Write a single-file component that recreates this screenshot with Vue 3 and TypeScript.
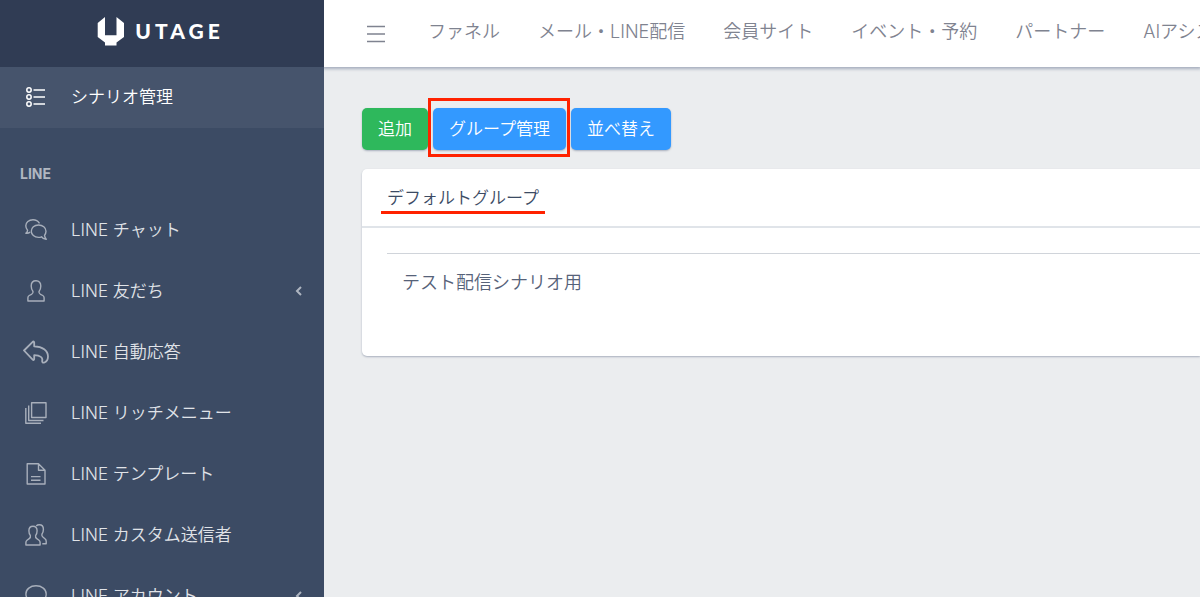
<script setup lang="ts">
interface MenuItem {
  label: string
  icon: string
  expandable?: boolean
}

const lineMenu: MenuItem[] = [
  { label: 'LINE チャット', icon: 'chat' },
  { label: 'LINE 友だち', icon: 'user', expandable: true },
  { label: 'LINE 自動応答', icon: 'reply' },
  { label: 'LINE リッチメニュー', icon: 'library' },
  { label: 'LINE テンプレート', icon: 'file' },
  { label: 'LINE カスタム送信者', icon: 'people' },
  { label: 'LINE アカウント', icon: 'bubble', expandable: true },
]

const topNav: string[] = [
  'ファネル',
  'メール・LINE配信',
  '会員サイト',
  'イベント・予約',
  'パートナー',
  'AIアシスタント',
]

const scenarios: string[] = ['テスト配信シナリオ用']
</script>

<template>
  <div class="layout">
    <aside class="sidebar">
      <a href="#" class="brand">
        <svg class="brand-mark" viewBox="0 0 28 30" aria-hidden="true">
          <path d="M8 1V19.300H19.500V1L27 7V21L19.500 26.500V29.500H8V26.500L.7 21V7Z" />
        </svg>
        <span class="brand-name">UTAGE</span>
      </a>
      <nav class="menu">
        <a href="#" class="item active">
          <svg class="icon" viewBox="0 0 26 26" aria-hidden="true">
            <circle cx="6" cy="6" r="2.200" /><circle cx="6" cy="13" r="2.200" /><circle cx="6" cy="20" r="2.200" />
            <path d="M10.500 6H22M10.500 13H22M10.500 20H22" />
          </svg>
          <span>シナリオ管理</span>
        </a>
        <h2 class="section">LINE</h2>
        <a v-for="item in lineMenu" :key="item.label" href="#" class="item">
          <svg class="icon" viewBox="0 0 26 26" aria-hidden="true">
            <template v-if="item.icon === 'chat'">
              <path d="M16.500 6.300C15 4 12.800 2.800 10 2.800C5.800 2.800 2.800 5.500 2.800 8.800C2.800 10.700 3.500 12 4.600 13.200C4.700 14.500 4 15.300 2.800 16.200C4.600 16.400 6 16 7.200 15.200" />
              <path d="M15.500 8C11.300 8 8.300 10.800 8.300 14.200S11.300 20.400 15.500 20.400C16.600 20.400 17.600 20.200 18.500 19.800C19.800 21.500 21.500 22.400 23.300 22.300C22.400 21 21.700 19.800 21.500 18.300C22.400 17.100 23 15.800 23 14.200C23 10.800 19.700 8 15.500 8Z" />
            </template>
            <path v-else-if="item.icon === 'user'" d="M13 2.800C9.800 2.800 8.200 5 8.200 8C8.200 10.300 8.800 12 10 13.500C10.300 14.800 9.800 15.600 8.500 16.300L6.200 17.500C5.300 18 4.900 18.800 4.900 19.800V23H21.100V19.800C21.100 18.800 20.700 18 19.800 17.500L17.500 16.300C16.200 15.600 15.700 14.800 16 13.500C17.200 12 17.800 10.300 17.800 8C17.800 5 16.200 2.800 13 2.800Z" />
            <path v-else-if="item.icon === 'reply'" class="bold" d="M1 11.500L9.700 2.800C10.400 2.200 11.200 2.600 11.200 3.500V7.300C19.500 7.500 25 11.500 25 17.500C25 20.300 23.800 22.500 21.500 23.500C20 24 18.900 23.300 19.200 21.800C20 18.500 17.500 16.500 11.200 16.200V20C11.200 20.900 10.400 21.300 9.700 20.600Z" />
            <path v-else-if="item.icon === 'library'" d="M8.600 2.800H23V17.500H8.600ZM5.700 5.500V20.500H20.500M2.800 8V23.200H18" />
            <path v-else-if="item.icon === 'file'" d="M4.200 2.800H15.500L22 9.300V23H4.200ZM15.500 2.800V9.300H22M8 15.600H17.500M8 19.200H17.500" />
            <template v-else-if="item.icon === 'people'">
              <path d="M10 4.200C7.300 4.200 5.900 6 5.900 8.700C5.900 10.800 6.500 12.500 7.400 13.700C7.700 15 7.300 15.800 6.200 16.600L4 18.200C3.200 18.800 2.900 19.500 2.900 20.400V23H17.100V20.400C17.100 19.500 16.800 18.800 16 18.200L13.800 16.600C12.700 15.800 12.300 15 12.600 13.700C13.500 12.500 14.100 10.800 14.100 8.700C14.100 6 12.700 4.200 10 4.200Z" />
              <path d="M13.200 4C14 3.200 15 2.800 16.300 2.800C19 2.800 20.400 4.700 20.400 7.300C20.400 9.500 19.800 11.200 18.900 12.300C18.600 13.700 19 14.500 20.100 15.300L22 16.800C22.900 17.400 23.200 18.200 23.200 19.200V21.800H19.300" />
            </template>
            <path v-else d="M13 2.800C7.200 2.800 2.900 6.300 2.900 11S7.200 19.500 13 19.500L18.500 23V18.500C21.400 17 23.200 14.200 23.200 11C23.200 6.300 18.800 2.800 13 2.800Z" />
          </svg>
          <span>{{ item.label }}</span>
          <svg v-if="item.expandable" class="chevron" viewBox="0 0 8 10" aria-hidden="true">
            <path d="M6 1L2 5L6 9" />
          </svg>
        </a>
      </nav>
    </aside>

    <div class="page">
      <header class="header">
        <button type="button" class="toggle" aria-label="メニュー">
          <svg viewBox="0 0 18 18" aria-hidden="true"><path d="M0 1.500H18M0 9H18M0 16.500H18" /></svg>
        </button>
        <nav class="top-nav">
          <a v-for="label in topNav" :key="label" href="#">{{ label }}</a>
        </nav>
      </header>

      <main class="content">
        <div class="actions">
          <button type="button" class="btn success">追加</button>
          <div class="highlight">
            <button type="button" class="btn info">グループ管理</button>
          </div>
          <button type="button" class="btn info">並べ替え</button>
        </div>

        <section class="card">
          <div class="card-header"><h1 class="title">デフォルトグループ</h1></div>
          <div class="card-body">
            <table class="scenarios">
              <tbody>
                <tr v-for="name in scenarios" :key="name">
                  <td><a href="#">{{ name }}</a></td>
                </tr>
              </tbody>
            </table>
          </div>
        </section>
      </main>
    </div>
  </div>
</template>

<style>
body {
  margin: 0;
  overflow: hidden;
  background: #ebedef;
}
</style>

<style scoped>
.layout {
  display: flex;
  height: 100vh;
  font-family: Inter, "Noto Sans CJK JP", sans-serif;
  font-size: 18px;
  font-weight: 350;
  line-height: 26px;
  color: #3c4b64;
}
.layout * {
  box-sizing: border-box;
}
a {
  color: inherit;
  text-decoration: none;
}
.sidebar {
  flex: 0 0 324px;
  overflow: hidden;
  background: #3c4b64;
  color: #e0e3e8;
}
.brand {
  display: flex;
  align-items: center;
  justify-content: center;
  gap: 10px;
  height: 67px;
  padding: 0 3px 5px 0;
  background: #303c54;
  color: #fff;
}
.brand-mark {
  width: 28px;
  height: 30px;
  fill: #fff;
}
.brand-name {
  font-family: Lato, sans-serif;
  font-size: 21px;
  font-weight: 900;
  letter-spacing: 4px;
}
.item {
  display: flex;
  align-items: center;
  height: 61px;
  padding: 0 21px 2px 23px;
  font-size: 17px;
  white-space: nowrap;
}
.item.active {
  background: #46546c;
  color: #fff;
}
.icon {
  flex: none;
  width: 26px;
  height: 26px;
  margin-right: 22px;
  fill: none;
  stroke: #a8afbb;
  stroke-width: 1.4;
  stroke-linejoin: round;
}
.icon .bold {
  stroke-width: 1.8;
}
.active .icon {
  stroke: #fff;
  stroke-width: 1.5;
}
.chevron {
  width: 8px;
  height: 10px;
  margin-left: auto;
  fill: none;
  stroke: #aeb5c0;
  stroke-width: 2;
}
.section {
  margin: 0;
  padding: 36px 20px 16px;
  font-size: 14px;
  font-weight: 700;
  line-height: 20px;
  color: #b1b7c1;
}
.page {
  flex: 1;
  min-width: 0;
  overflow: hidden;
}
.header {
  display: flex;
  align-items: center;
  height: 67px;
  padding-left: 43px;
  background: #fff;
  box-shadow: 0 1px 3px 1px #a5adbd;
}
.toggle {
  flex: none;
  width: 18px;
  height: 18px;
  margin: 0 43px 0 0;
  padding: 0;
  border: 0;
  background: none;
}
.toggle svg {
  display: block;
  fill: none;
  stroke: #7f8390;
  stroke-width: 1.5;
}
.top-nav {
  display: flex;
  gap: 38px;
  padding-bottom: 4px;
  white-space: nowrap;
  color: #7f8390;
}
.content {
  padding: 41px 0 0 38px;
}
.actions {
  display: flex;
  gap: 5px;
}
.btn {
  display: block;
  height: 42px;
  padding: 0 16px 1px;
  border: 0;
  border-radius: 5px;
  color: #fff;
  font: inherit;
  font-size: 17px;
  box-shadow: 0 1px 2px #a9b0bd;
}
.success {
  background: #2eb85c;
}
.info {
  background: #3399ff;
}
.highlight {
  position: relative;
}
.highlight::after {
  content: "";
  position: absolute;
  inset: -10px -4px -7px -5px;
  border: 3px solid #ff2200;
  pointer-events: none;
}
.card {
  margin-top: 19px;
  border-radius: 5px 0 0 5px;
  background: #fff;
  box-shadow: 0 1px 2px #a9b0bd;
}
.card-header {
  display: flex;
  padding: 16px 25px 15px;
  border-bottom: 2px solid #e0e4e9;
}
.title {
  position: relative;
  margin: 0;
  font-size: 17px;
  font-weight: 350;
  line-height: 26px;
}
.title::after {
  content: "";
  position: absolute;
  inset: auto -6px -3px -6px;
  height: 3px;
  background: #ff2200;
}
.card-body {
  padding: 25px 0 44px 25px;
}
.scenarios {
  width: 100%;
  border-spacing: 0;
}
td {
  padding: 16px 15px;
  border-top: 1px solid #d0d4da;
  color: #566279;
}
</style>
